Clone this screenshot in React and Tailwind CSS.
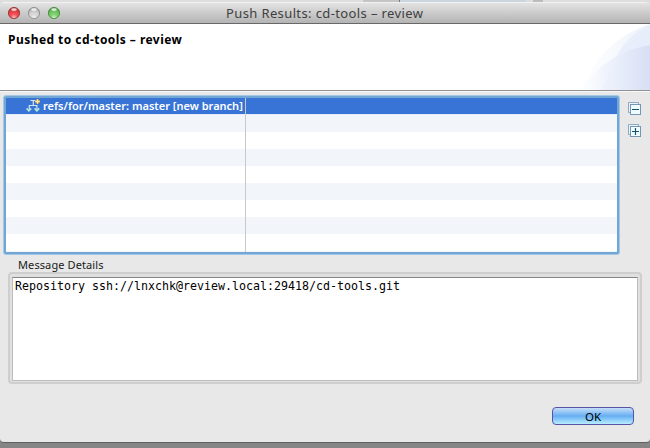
function TrafficLight({ fill, rim, id }) {
  return (
    <svg width="14" height="14" viewBox="0 0 14 14">
      <defs>
        <radialGradient id={id} cx="0.5" cy="0.9" r="0.75">
          <stop offset="0" stopColor="#fff" stopOpacity="0.75" />
          <stop offset="0.55" stopColor={fill} stopOpacity="0.2" />
          <stop offset="1" stopColor={rim} stopOpacity="0.5" />
        </radialGradient>
      </defs>
      <circle cx="7" cy="7" r="5.7" fill={fill} />
      <circle cx="7" cy="7" r="5.6" fill={`url(#${id})`} stroke={rim} strokeWidth="0.8" />
      <ellipse cx="7" cy="3.6" rx="2.8" ry="1.4" fill="#fff" opacity="0.75" />
    </svg>
  );
}

function BranchIcon() {
  return (
    <svg width="15" height="15" viewBox="0 0 15 15" fill="none" className="shrink-0">
      <path d="M4.5 2.5h5M7.3 2.5v5M3.3 7.5h7.6M3.3 7v4M10.9 7v4" stroke="#d3e5f4" strokeWidth="1.2" />
      <path d="M.6 10.4 2.9 12.9 5.2 10.4M8.6 10.4l2.3 2.5 2.3-2.5" stroke="#b4eadb" strokeWidth="1.6" />
      <path d="M11.5 1v5M9 3.5h5" stroke="#a98247" strokeWidth="2.6" />
      <path d="M11.5 1.2v4.6M9.2 3.5h4.6" stroke="#fff0a8" strokeWidth="1.4" />
    </svg>
  );
}

function TreeButton({ plus, label }) {
  return (
    <button aria-label={label} className="h-[14px] w-[14px]">
      <svg width="14" height="14" viewBox="0 0 14 14" fill="none">
        <path d="M.5 10.5v-10h10v2M.5 10.5h2" stroke="#91a8bf" />
        <path d="M1 1h9v1H2v8H1z" fill="#e6f6fc" />
        <rect x="2.5" y="2.5" width="10" height="10" fill="#effcff" stroke="#7895b4" />
        <path d="M4 7.5h7" stroke="#13556f" strokeWidth="1.2" />
        {plus && <path d="M7.5 4v7" stroke="#13556f" strokeWidth="1.2" />}
      </svg>
    </button>
  );
}

export default function App() {
  return (
    <div className="flex h-[448px] w-[650px] flex-col overflow-hidden bg-[#858585] font-['Noto_Sans',sans-serif] text-black">
      <div className="-mb-[6px] flex h-[8px] shrink-0 bg-[#dedede]">
        <div className="w-[363px]" />
        <div className="w-[36px] bg-[#c5c5c5]" />
        <div className="w-[1px] bg-[#777]" />
        <div className="w-[126px] bg-[#cbd6df]" />
        <div className="w-[7px]" />
        <div className="w-[10px] bg-[#bcbcbc]" />
      </div>
      <div className="flex h-[441px] shrink-0 flex-col overflow-hidden rounded-t-[5px] rounded-b-[4px] border-b border-[#606060] bg-[#e8e8e8]">
        <header className="grid h-[22px] shrink-0 grid-cols-[226px_1fr] items-center border-t border-b border-t-[#f1f1f1] border-b-[#686868] bg-linear-to-b from-[#e3e3e3] to-[#b4b4b4]">
          <div className="flex gap-[6px] pl-[7px]">
            <TrafficLight id="close" fill="#f0474c" rim="#8d3032" />
            <TrafficLight id="minimize" fill="#d4d4d4" rim="#858585" />
            <TrafficLight id="zoom" fill="#74ce65" rim="#437d3b" />
          </div>
          <h1 className="text-[13px] leading-[20px] tracking-[0.38px] whitespace-nowrap text-[#404040]">Push Results: cd-tools – review</h1>
        </header>
        <section className="flex h-[67px] shrink-0 justify-between border-b border-[#929292] bg-white">
          <h2 className="pt-[7px] pl-[8px] text-[12px] leading-[17px] font-bold tracking-[0.45px] whitespace-nowrap">Pushed to cd-tools – review</h2>
          <svg width="75" height="66" viewBox="0 0 75 66">
            <defs>
              <linearGradient id="arc" x1="0" x2="1">
                <stop offset="0" stopColor="#fff" />
                <stop offset="0.5" stopColor="#f7f9fd" />
                <stop offset="1" stopColor="#edf1fb" />
              </linearGradient>
              <linearGradient id="arcFront" x1="0" x2="1">
                <stop offset="0" stopColor="#f4f7fe" stopOpacity="0" />
                <stop offset="0.5" stopColor="#eaeffb" />
                <stop offset="1" stopColor="#d8def4" />
              </linearGradient>
            </defs>
            <path d="M5 66Q29 14 75 0v66z" fill="url(#arc)" />
            <path d="M37 42Q49 12 75 1v65H27z" fill="#e2eafa" opacity=".65" />
            <path d="M5 66Q32 28 75 21v45z" fill="url(#arcFront)" />
          </svg>
        </section>
        <main className="flex h-[167px] shrink-0 border-t border-[#f7f7f7] pt-[3px] pl-[3px]">
          <div className="h-[160px] w-[617px] rounded-[3px] border border-[#a4c7e6] bg-[#72a7d5] p-[2px]">
            <div className="grid h-[154px] grid-cols-[240px_1fr] grid-rows-[17px_1fr] bg-white bg-[repeating-linear-gradient(to_bottom,#f2f6fb_0px,#f2f6fb_17px,#fff_17px,#fff_34px)] bg-[position:0_17px]">
              <div className="flex border-r border-b border-r-[#c8c8c8] border-b-[#e4edf9] bg-[#3874d6] pl-[20px] text-white">
                <BranchIcon />
                <span className="pl-[2px] text-[11px] leading-[15px] font-semibold whitespace-nowrap">refs/for/master: master [new branch]</span>
              </div>
              <div className="border-b border-[#e4edf9] bg-[#3874d6]" />
              <div className="border-r border-[#c8c8c8]" />
              <div />
            </div>
          </div>
          <div className="flex flex-col gap-[8px] pt-[7px] pl-[8px]">
            <TreeButton label="Collapse all" />
            <TreeButton plus label="Expand all" />
          </div>
        </main>
        <section className="flex h-[126px] shrink-0 flex-col px-[8px]">
          <h3 className="h-[14px] pl-[10px] text-[11px] leading-[13px] tracking-[0.1px] text-[#202020]">Message Details</h3>
          <div className="h-[112px] rounded-[4px] border-2 border-[#cecece] bg-[#e0e0e0] p-[2px] pt-[3px]">
            <div className="h-[104px] border border-t-[#858585] border-r-[#bcbcbc] border-b-[#bcbcbc] border-l-[#bcbcbc] bg-white pl-[2px] font-['DejaVu_Sans_Mono',monospace] text-[11.63px] leading-[16px] whitespace-nowrap">
              Repository ssh://lnxchk@review.local:29418/cd-tools.git
            </div>
          </div>
        </section>
        <footer className="flex justify-end pt-[23px] pr-[16px]">
          <button className="h-[18px] w-[82px] rounded-[4px] border border-[#5555a4] bg-linear-to-b from-[#c5def8] via-[#65aef2] to-[#b8eeff] text-[11.5px] leading-[15px]">OK</button>
        </footer>
      </div>
    </div>
  );
}
